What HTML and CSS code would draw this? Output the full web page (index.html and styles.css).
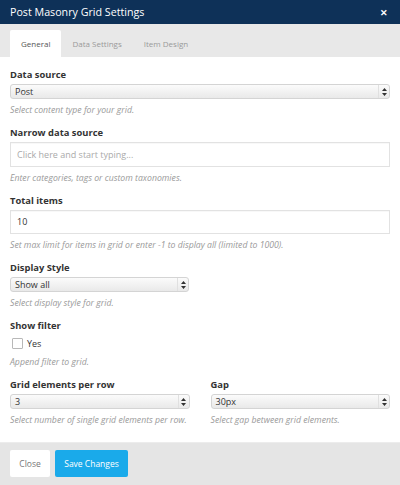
FILE: index.html
```html
<!DOCTYPE html>
<html>
<head>
<meta charset="utf-8">
<link rel="stylesheet" href="styles.css">
</head>
<body>
<div class="modal">
  <div class="header">
    <span class="title">Post Masonry Grid Settings</span>
    <span class="close">&#x2715;</span>
  </div>
  <div class="tabs">
    <div class="tab active">General</div>
    <div class="tab">Data Settings</div>
    <div class="tab">Item Design</div>
  </div>
  <div class="content">
    <div class="group">
      <div class="label">Data source</div>
      <div class="select full">
        <span class="value">Post</span>
        <span class="arrows"><svg width="5" height="8" viewBox="0 0 5 8"><path d="M2.5 0L5 3H0z M2.5 8L0 5H5z" fill="#333"/></svg></span>
      </div>
      <div class="help">Select content type for your grid.</div>
    </div>
    <div class="group">
      <div class="label">Narrow data source</div>
      <div class="input placeholder">Click here and start typing...</div>
      <div class="help">Enter categories, tags or custom taxonomies.</div>
    </div>
    <div class="group">
      <div class="label">Total items</div>
      <div class="input">10</div>
      <div class="help">Set max limit for items in grid or enter -1 to display all (limited to 1000).</div>
    </div>
    <div class="group">
      <div class="label">Display Style</div>
      <div class="select half">
        <span class="value">Show all</span>
        <span class="arrows"><svg width="5" height="8" viewBox="0 0 5 8"><path d="M2.5 0L5 3H0z M2.5 8L0 5H5z" fill="#333"/></svg></span>
      </div>
      <div class="help">Select display style for grid.</div>
    </div>
    <div class="group">
      <div class="label">Show filter</div>
      <div class="check-row">
        <span class="checkbox"></span>
        <span class="check-label">Yes</span>
      </div>
      <div class="help">Append filter to grid.</div>
    </div>
    <div class="row">
      <div class="group col">
        <div class="label">Grid elements per row</div>
        <div class="select">
          <span class="value">3</span>
          <span class="arrows"><svg width="5" height="8" viewBox="0 0 5 8"><path d="M2.5 0L5 3H0z M2.5 8L0 5H5z" fill="#333"/></svg></span>
        </div>
        <div class="help">Select number of single grid elements per row.</div>
      </div>
      <div class="group col">
        <div class="label">Gap</div>
        <div class="select">
          <span class="value">30px</span>
          <span class="arrows"><svg width="5" height="8" viewBox="0 0 5 8"><path d="M2.5 0L5 3H0z M2.5 8L0 5H5z" fill="#333"/></svg></span>
        </div>
        <div class="help">Select gap between grid elements.</div>
      </div>
    </div>
  </div>
  <div class="footer">
    <button class="btn btn-close">Close</button>
    <button class="btn btn-save">Save Changes</button>
  </div>
</div>
</body>
</html>
```
FILE: styles.css
```css
* { box-sizing: border-box; }
html, body { margin: 0; padding: 0; }
body {
  font-family: "Open Sans", "Noto Sans", sans-serif;
  background: #fff;
  width: 400px;
  height: 485px;
  overflow: hidden;
}
.modal {
  width: 400px;
  height: 485px;
  display: flex;
  flex-direction: column;
}
.header {
  height: 24px;
  background: #0e3158;
  color: #fff;
  display: flex;
  align-items: center;
  justify-content: space-between;
  padding: 0 12px 0 10px;
}
.title {
  font-size: 10.7px;
  font-weight: 400;
}
.close {
  font-size: 8.5px;
  font-weight: 700;
}
.tabs {
  height: 33px;
  background: #e8e8e8;
  display: flex;
  align-items: flex-end;
  padding-left: 10px;
}
.tab {
  height: 27px;
  padding: 0 11px;
  display: flex;
  align-items: center;
  font-size: 8px;
  color: #9a9a9a;
}
.tab.active {
  background: #fff;
  color: #555;
  border-radius: 2px 2px 0 0;
}
.content {
  flex: 1;
  padding: 11px 10px 0 10px;
  display: flex;
  flex-direction: column;
}
.group {
  display: flex;
  flex-direction: column;
  margin-bottom: 9px;
}
.label {
  font-size: 9.4px;
  font-weight: 700;
  color: #333;
  line-height: 14px;
  margin-bottom: 2px;
}
.select {
  height: 15px;
  border: 1px solid #d4d4d4;
  border-radius: 3px;
  background: linear-gradient(#fbfbfb, #e9e9e9);
  display: flex;
  align-items: center;
  font-size: 9px;
  color: #333;
}
.select.half { width: 179px; }
.select .value {
  flex: 1;
  padding-left: 4px;
  line-height: 13px;
}
.select .arrows {
  width: 11px;
  height: 13px;
  display: flex;
  align-items: center;
  justify-content: center;
  border-left: 1px solid #e0e0e0;
}
.input {
  height: 24.5px;
  border: 1px solid #e2e2e2;
  box-shadow: inset 0 1px 1px rgba(0,0,0,0.03);
  display: flex;
  align-items: center;
  padding-left: 6px;
  font-size: 9px;
  color: #333;
}
.input.placeholder { color: #aaa; }
.help {
  font-size: 8.7px;
  font-style: italic;
  color: #9a9a9a;
  line-height: 14px;
  margin-top: 4px;
}
.check-row {
  height: 16px;
  display: flex;
  align-items: center;
  padding-left: 2px;
}
.checkbox {
  width: 11px;
  height: 11px;
  border: 1px solid #b8b8b8;
  border-radius: 1px;
  background: #fff;
}
.check-label {
  margin-left: 4px;
  font-size: 9px;
  font-weight: 400;
  color: #333;
  line-height: 11px;
}
.row {
  display: flex;
  gap: 21px;
}
.col { flex: 1; }
.footer {
  height: 43px;
  background: #e5e5e5;
  border-top: 1px solid #ececec;
  display: flex;
  align-items: flex-start;
  padding: 7px 10px 0 10px;
  gap: 5px;
}
.btn {
  height: 27px;
  border: none;
  border-radius: 2px;
  font-family: "Open Sans", "Noto Sans", sans-serif;
  font-size: 8.5px;
  padding: 0;
}
.btn-close {
  width: 40px;
  background: #fff;
  color: #777;
}
.btn-save {
  width: 73px;
  background: #1aaaea;
  color: #fff;
}
```
